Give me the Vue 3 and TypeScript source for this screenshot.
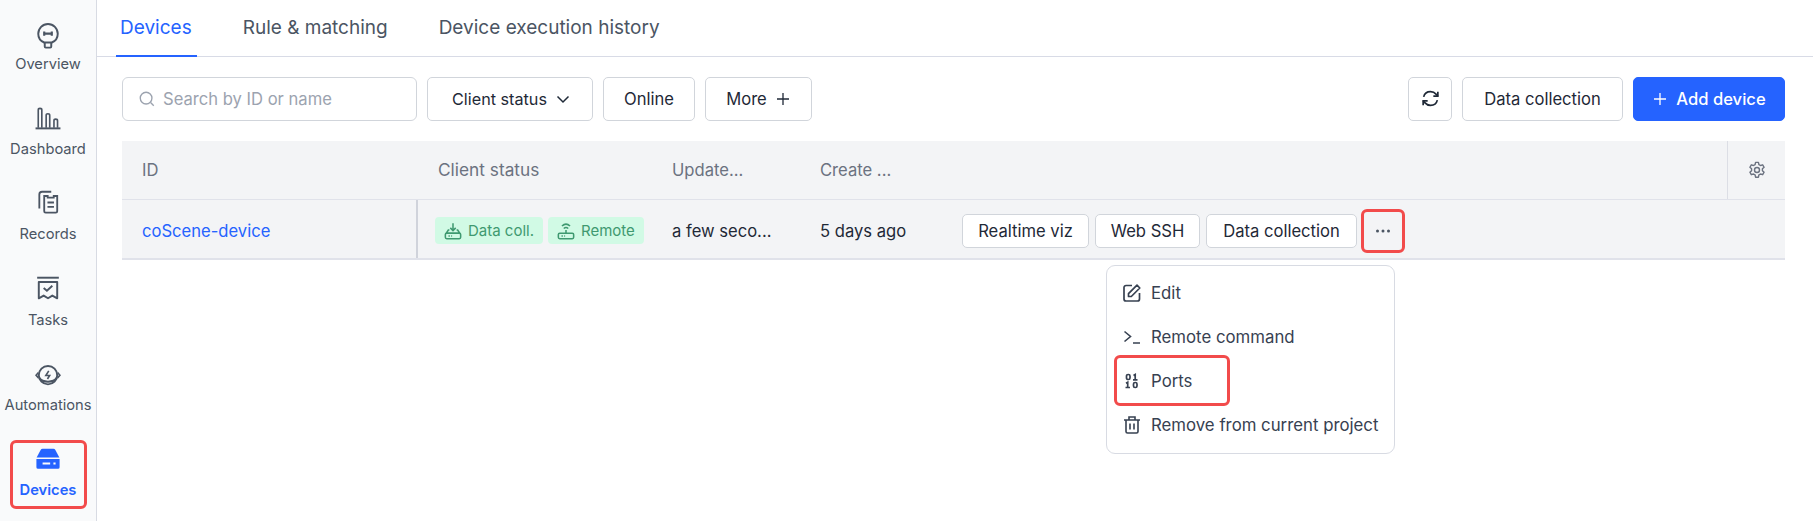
<script setup lang="ts">
interface NavItem { label: string; key: string; active?: boolean }
const nav: NavItem[] = [
  { label: 'Overview', key: 'overview' },
  { label: 'Dashboard', key: 'dashboard' },
  { label: 'Records', key: 'records' },
  { label: 'Tasks', key: 'tasks' },
  { label: 'Automations', key: 'automations' },
  { label: 'Devices', key: 'devices', active: true },
]
const tabs = ['Devices', 'Rule & matching', 'Device execution history']
</script>

<template>
  <div class="page">
    <aside class="sidebar">
      <div v-for="item in nav" :key="item.key" class="nav-item" :class="{ active: item.active }">
        <svg v-if="item.key === 'overview'" class="nav-icon" viewBox="0 0 24 24" fill="none" stroke="currentColor" stroke-width="1.800">
          <path d="M8.500 21.700C5 20.300 3 17.300 3 13.600a9 9 0 0 1 18 0c0 3.700-2 6.700-5.500 8.100z" />
          <path d="M9 21.800v3.600c0 .6.400 1 .9 1h4.200c.5 0 .9-.4.900-1v-3.600" />
          <path d="M8.500 11.500v4M15.500 11.500v4M8.500 13.500h7" stroke-width="2" />
        </svg>
        <svg v-else-if="item.key === 'dashboard'" class="nav-icon" viewBox="0 0 24 24" fill="none" stroke="currentColor" stroke-width="1.500">
          <path d="M.5 22.500h23" stroke-width="1.800" />
          <path d="M3 22V5.500c0-1 .6-1.500 1.600-1.500s1.700.5 1.700 1.500V22" />
          <path d="M10.300 22V10.500c0-1 .6-1.500 1.600-1.500s1.700.5 1.700 1.500V22" />
          <path d="M17.500 22v-6.500c0-1 .6-1.500 1.600-1.500s1.700.5 1.700 1.500V22" />
        </svg>
        <svg v-else-if="item.key === 'records'" class="nav-icon" viewBox="0 0 24 24" fill="none" stroke="currentColor" stroke-width="1.700">
          <path d="M15 2.500H6.500A2.500 2.500 0 0 0 4 5v13" />
          <path d="M8.500 6.500v14c0 .8.600 1.300 1.300 1.300h9.400c.8 0 1.300-.5 1.300-1.300v-14h-3.200V8h-5.600V6.500z" />
          <path d="M11.500 12.500h6M11.500 16.500h6" />
        </svg>
        <svg v-else-if="item.key === 'tasks'" class="nav-icon" viewBox="0 0 24 24" fill="none" stroke="currentColor" stroke-width="1.800">
          <path d="M2 2.500h20" />
          <path d="M3.500 6.500h17v15L16 19l-4 2.500L8 19l-4.500 2.500z" stroke-linejoin="round" />
          <path d="M8 12l3 2.500 5-4.500" />
        </svg>
        <svg v-else-if="item.key === 'automations'" class="nav-icon" viewBox="0 0 24 24" fill="none" stroke="currentColor" stroke-width="1.800">
          <g transform="translate(0 2.500)">
            <circle cx="12" cy="11.500" r="8.500" />
            <path d="M4 14c1.500 2.500 4.500 3.500 8 3.500s6.500-1 8-3.500" />
            <path d="M3.200 9 1 11.500 3.200 14M20.800 9 23 11.500 20.800 14" stroke-width="1.500" />
            <path d="M12.700 7.500 10 11.800h3.500l-2 3.200" stroke-width="1.500" />
          </g>
        </svg>
        <svg v-else class="nav-icon" viewBox="0 0 24 24" fill="currentColor">
          <g transform="translate(0 1)">
            <path d="M7 2.500h10c.8 0 1.400.4 1.800 1.100L22.500 10.500h-21l3.700-6.900C5.600 2.900 6.200 2.500 7 2.500z" />
            <path fill-rule="evenodd" d="M1.300 12h21.400v7.500a1.500 1.500 0 0 1-1.500 1.500H2.800a1.500 1.500 0 0 1-1.500-1.500zM7 15.200V17h7v-1.800zm10 0V17h2v-1.800z" />
          </g>
        </svg>
        <span>{{ item.label }}</span>
      </div>
      <div class="mark mark-nav"></div>
    </aside>

    <main class="content">
      <nav class="tabs">
        <div v-for="(t, i) in tabs" :key="t" class="tab" :class="{ on: i === 0 }">{{ t }}</div>
      </nav>

      <section class="body">
        <div class="toolbar">
          <div class="search">
            <svg class="ic18" viewBox="0 0 20 20" fill="none" stroke="#9ca3af" stroke-width="1.500">
              <circle cx="9" cy="9" r="6.500" /><path d="M14 14l3.500 3.500" />
            </svg>
            <span>Search by ID or name</span>
          </div>
          <button class="btn filter">Client status
            <svg class="ic16" viewBox="0 0 16 16" fill="none" stroke="currentColor" stroke-width="1.500"><path d="M2.500 5.500 8 11l5.500-5.500" /></svg>
          </button>
          <button class="btn online">Online</button>
          <button class="btn more">More
            <svg class="ic16" viewBox="0 0 16 16" fill="none" stroke="currentColor" stroke-width="1.300"><path d="M8 2v12M2 8h12" /></svg>
          </button>
          <div class="spacer"></div>
          <button class="btn square">
            <svg class="ic21" viewBox="0 0 20 20" fill="none" stroke="#1f2937" stroke-width="1.600">
              <path d="M3.500 8.500C4.200 5.500 6.800 3.500 10 3.500c2.200 0 4 .9 5.500 2.600L17 7.800" />
              <path d="M17 3.500v4.300h-4.300" />
              <path d="M16.500 11.500c-.7 3-3.300 5-6.500 5-2.200 0-4-.9-5.500-2.600L3 12.200" />
              <path d="M3 16.500v-4.300h4.300" />
            </svg>
          </button>
          <button class="btn collect">Data collection</button>
          <button class="btn primary">
            <svg class="ic16" viewBox="0 0 16 16" fill="none" stroke="#fff" stroke-width="1.300"><path d="M8 2v12M2 8h12" /></svg>
            Add device
          </button>
        </div>

        <div class="table">
          <div class="thead">
            <div class="c-id">ID</div>
            <div class="c-status head-status">Client status</div>
            <div class="c-upd">Update...</div>
            <div class="c-crt">Create ...</div>
            <div class="c-act"></div>
            <div class="c-set">
              <svg class="ic20" viewBox="0 0 24 24" fill="none" stroke="#6b7280" stroke-width="1.700">
                <path d="M10.300 2.800h3.400l.6 2.700 1.900 1.100 2.600-.8 1.700 2.900-2 1.900v2.200l2 1.900-1.700 2.900-2.600-.8-1.900 1.100-.6 2.700h-3.400l-.6-2.700-1.900-1.100-2.600.8-1.700-2.900 2-1.900v-2.200l-2-1.900 1.700-2.900 2.600.8 1.900-1.100z" stroke-linejoin="round" />
                <circle cx="12" cy="12" r="3" />
              </svg>
            </div>
          </div>
          <div class="trow">
            <div class="c-id link">coScene-device</div>
            <div class="c-status divided">
              <span class="tag">
                <svg class="ic18" viewBox="0 0 20 20" fill="none" stroke="currentColor" stroke-width="1.700">
                  <path d="M10 1.500v7.500M7 6.500 10 9.500l3-3" />
                  <path d="M6 9H4.800L2.500 12.500h15L15.200 9H14" />
                  <rect x="1.500" y="12.500" width="17" height="6" rx="1.500" />
                  <path d="M5 15.500h1.500M8 15.500h1" />
                </svg>
                Data coll.
              </span>
              <span class="tag">
                <svg class="ic18" viewBox="0 0 20 20" fill="none" stroke="currentColor" stroke-width="1.700">
                  <path d="M5.500 4.500c2.700-2.500 6.300-2.500 9 0M7.500 7.200c1.500-1.200 3.500-1.200 5 0" />
                  <path d="M10 9v3.500" />
                  <rect x="1.500" y="12.500" width="17" height="6" rx="1.500" />
                  <path d="M5 15.500h1.500M8 15.500h1" />
                </svg>
                Remote
              </span>
            </div>
            <div class="c-upd">a few seco...</div>
            <div class="c-crt">5 days ago</div>
            <div class="c-act">
              <button class="btn small viz">Realtime viz</button>
              <button class="btn small ssh">Web SSH</button>
              <button class="btn small dc">Data collection</button>
              <div class="dots">
                <svg width="18" height="18" viewBox="0 0 18 18" fill="#4b5563"><circle cx="3.500" cy="9" r="1.500" /><circle cx="9" cy="9" r="1.500" /><circle cx="14.500" cy="9" r="1.500" /></svg>
                <div class="mark mark-dots"></div>
              </div>
            </div>
          </div>
        </div>

        <div class="menu">
          <div class="menu-item">
            <svg class="ic20" viewBox="0 0 20 20" fill="none" stroke="#374151" stroke-width="1.700">
              <path d="M10 2.500H4a2 2 0 0 0-2 2v11.500a2 2 0 0 0 2 2h11.500a2 2 0 0 0 2-2v-6" />
              <path d="M6.500 13.500v-2.800L15 2.200l2.800 2.800-8.500 8.500z" stroke-linejoin="round" />
            </svg>
            Edit
          </div>
          <div class="menu-item">
            <svg class="ic20" viewBox="0 0 20 20" fill="none" stroke="#374151" stroke-width="1.600">
              <path d="M2.500 4.500l6 5-6 5M11 16h7" />
            </svg>
            Remote command
          </div>
          <div class="menu-item">
            <svg class="ic20" viewBox="0 0 20 20" fill="none" stroke="#374151" stroke-width="1.700">
              <rect x="4.500" y="3.500" width="3.500" height="5" rx="1.600" />
              <path d="M11.500 4.500l1.700-1v5.300M11 8.800h4.500" />
              <path d="M4 12.200l1.700-1v5.300M3.500 16.500H8" />
              <rect x="11.500" y="11.500" width="3.500" height="5" rx="1.600" />
            </svg>
            Ports
          </div>
          <div class="menu-item">
            <svg class="ic20" viewBox="0 0 20 20" fill="none" stroke="#374151" stroke-width="1.600">
              <path d="M2 5h16M7 5V2h6v3" />
              <path d="M4 5v11.500A1.500 1.500 0 0 0 5.500 18h9a1.500 1.500 0 0 0 1.500-1.500V5" />
              <path d="M8 8.500v6M12 8.500v6" />
            </svg>
            Remove from current project
          </div>
          <div class="mark mark-ports"></div>
        </div>
      </section>
    </main>
  </div>
</template>

<style>
html, body { margin: 0; background: #fff; overflow: hidden; }
</style>

<style scoped>
.page {
  display: flex;
  width: 1813px;
  height: 521px;
  font-family: Inter, "Liberation Sans", sans-serif;
  font-size: 16.600px;
  color: #1f2937;
  background: #fff;
  overflow: hidden;
}
.sidebar {
  position: relative;
  flex: 0 0 96px;
  box-sizing: content-box;
  border-right: 1px solid #d8dbe3;
  background: #f9fafb;
  padding-top: 19px;
}
.nav-item {
  display: flex;
  flex-direction: column;
  align-items: center;
  height: 85.200px;
  font-size: 14.700px;
  line-height: 20px;
  color: #4b5563;
}
.nav-item.active { color: #2563ff; font-weight: 600; }
.nav-icon { width: 26px; height: 26px; margin-bottom: 9px; overflow: visible; }
.mark {
  position: absolute;
  box-sizing: border-box;
  border: 3.500px solid #f24b4b;
  border-radius: 6px;
  pointer-events: none;
}
.mark-nav { left: 10px; top: 440px; width: 77px; height: 69px; }
.content { flex: 1; min-width: 0; }
.tabs {
  display: flex;
  height: 56px;
  box-sizing: content-box;
  padding-left: 19px;
  gap: 42px;
  border-bottom: 1.500px solid #d8dbe6;
}
.tab {
  box-sizing: border-box;
  height: 57px;
  padding: 15px 5px 0 4px;
  font-size: 19px;
  line-height: 26px;
  color: #4b5563;
}
.tab.on { color: #2563ff; border-bottom: 2px solid #2563ff; }
.body { position: relative; padding: 19.500px 28px 0 25px; }
.toolbar { display: flex; align-items: stretch; height: 44px; gap: 10px; }
.spacer { flex: 1; }
.search {
  display: flex;
  align-items: center;
  gap: 7px;
  box-sizing: border-box;
  width: 295px;
  padding-left: 15px;
  border: 1px solid #d1d5db;
  border-radius: 6px;
  color: #9ca3af;
}
.btn {
  display: inline-flex;
  align-items: center;
  justify-content: center;
  gap: 8px;
  box-sizing: border-box;
  padding: 0;
  border: 1px solid #d1d5db;
  border-radius: 5px;
  background: #fff;
  font: inherit;
  color: #1f2937;
}
.ic18 { width: 18px; height: 18px; flex: none; }
.ic20 { width: 20px; height: 20px; flex: none; }
.ic21 { width: 21px; height: 21px; flex: none; }
.ic16 { width: 16px; height: 16px; flex: none; }
.filter { width: 166px; padding-left: 3px; font-size: 16.200px; }
.online { width: 92px; }
.more { width: 107px; }
.square { width: 44px; }
.collect { width: 161px; }
.primary {
  width: 152px;
  border-color: #2563ff;
  background: #2563ff;
  color: #fff;
  font-weight: 500;
}
.table { margin-top: 20px; }
.thead, .trow { display: flex; align-items: stretch; background: #f3f4f6; }
.thead { height: 59px; color: #6b7280; border-bottom: 1.500px solid #e0e2ea; box-sizing: border-box; }
.trow { height: 60px; padding-top: 4px; border-bottom: 2px solid #e0e2ea; box-sizing: border-box; }
.thead > div { display: flex; align-items: center; }
.trow > div { display: flex; align-items: center; }
.trow > .divided { margin-top: -4px; padding-top: 4px; }
.c-id { width: 294px; padding-left: 20px; box-sizing: border-box; }
.c-status { width: 256px; box-sizing: border-box; gap: 5px; }
.head-status { padding-left: 22px; font-size: 17.300px; }
.c-upd { width: 148px; box-sizing: border-box; }
.c-crt { width: 142px; box-sizing: border-box; }
.c-act { flex: 1; gap: 6px; }
.c-set { width: 58px; justify-content: center; border-left: 1.500px solid #dcdee5; box-sizing: border-box; }
.link { color: #2563ff; }
.divided { border-left: 2px solid #d0d3db; padding-left: 17px; }
.tag {
  display: inline-flex;
  align-items: center;
  gap: 6px;
  height: 27px;
  padding: 0 9px;
  border-radius: 4px;
  background: #d1fae5;
  color: #3f9970;
  font-size: 15px;
  white-space: nowrap;
}
.small { height: 34px; }
.viz { width: 127px; }
.ssh { width: 105px; }
.dc { width: 151px; }
.dots {
  position: relative;
  display: flex;
  align-items: center;
  justify-content: center;
  width: 44px;
  height: 44px;
  margin-left: -2px;
}
.mark-dots { inset: 0; }
.menu {
  position: absolute;
  left: 1008.500px;
  top: 207.500px;
  box-sizing: border-box;
  width: 289.500px;
  height: 189px;
  padding: 5px 0;
  border: 1px solid #d8dbe3;
  border-radius: 9px;
  background: #fff;
  font-size: 16.800px;
}
.menu-item {
  display: flex;
  align-items: center;
  gap: 9.500px;
  height: 44px;
  padding-left: 15px;
  color: #374151;
  white-space: nowrap;
}
.mark-ports { left: 7px; top: 89px; width: 116px; height: 51px; }
</style>
